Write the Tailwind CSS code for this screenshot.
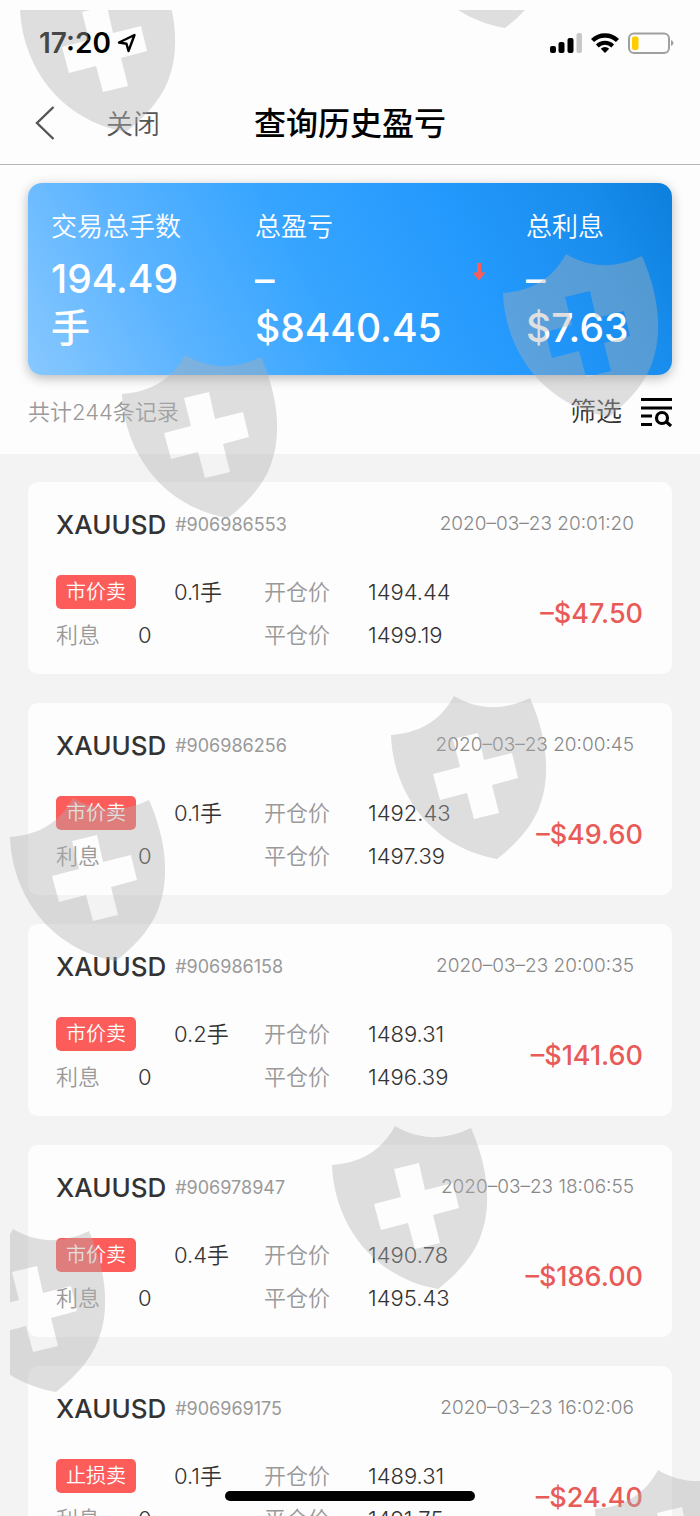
<!DOCTYPE html>
<html lang="zh-CN">
<head>
  <meta charset="UTF-8" />
  <meta name="viewport" content="width=device-width, initial-scale=1.0"/>
  <title>查询历史盈亏</title>
  <script src="https://cdn.jsdelivr.net/npm/@tailwindcss/browser@4"></script>
</head>
<body class="bg-[#f3f3f3] font-['Inter','Noto_Sans_CJK_SC',sans-serif] text-[#333]">

<div class="relative h-screen overflow-hidden">

  <!-- Status bar -->
  <div class="flex h-[86px] items-center justify-between bg-[#fdfdfd] pl-[39px] pr-[26px] text-black">
    <div class="flex items-center gap-[6px]">
      <span class="text-[28px] font-semibold leading-8">17:20</span>
      <svg class="h-5 w-5" viewBox="0 0 20 20" fill="none" stroke="currentColor" stroke-width="2.4" stroke-linejoin="round"><path d="M17.500 2 2 9.500l7.500 1.300L11.500 18Z"/></svg>
    </div>
    <div class="flex items-center gap-[9px]">
      <svg class="h-5 w-8" viewBox="0 0 32 20" fill="currentColor"><rect x="0" y="13" width="6" height="7" rx="2"/><rect x="8.500" y="9" width="6" height="11" rx="2"/><rect x="17.500" y="5" width="6" height="15" rx="2"/><rect x="26.500" y="0" width="5.500" height="20" rx="2" fill="#c8c8c8"/></svg>
      <svg class="h-5 w-7" viewBox="0 0 28 20" fill="none" stroke="currentColor"><path d="M1.500 7.500a18 18 0 0 1 25 0" stroke-width="4.400"/><path d="M6.300 13a11 11 0 0 1 15.400 0" stroke-width="4"/><path d="M14 20l-4.200-4.200a6 6 0 0 1 8.400 0Z" fill="currentColor" stroke="none"/></svg>
      <svg class="h-[22px] w-[46px]" viewBox="0 0 46 22" fill="none"><rect x="1" y="1.500" width="40" height="19.500" rx="5" stroke="#a0a0a0" stroke-width="2"/><rect x="4" y="4.500" width="6.500" height="13.500" rx="2" fill="#fc0"/><path d="M43 8q2.500 1 2.500 3t-2.500 3Z" fill="#a0a0a0"/></svg>
    </div>
  </div>

  <!-- Nav bar -->
  <header class="relative flex h-[79px] items-center border-b border-[#b5b5b5] bg-[#fdfdfd] pl-[34px]">
    <button type="button" aria-label="返回" class="-mt-1 text-[#555]">
      <svg class="h-9 w-[22px]" viewBox="0 0 22 36" fill="none" stroke="currentColor" stroke-width="2.400"><path d="M19.500 2 3 18l16.500 16"/></svg>
    </button>
    <button type="button" class="ml-[50px] text-[27px] font-[350] leading-8 text-[#555]">关闭</button>
    <h1 class="absolute inset-x-0 top-5 text-center text-[32px] font-medium leading-9 text-black pointer-events-none">查询历史盈亏</h1>
  </header>

  <!-- Summary -->
  <section class="bg-[#fdfdfd] px-7 pt-[18px]">
    <div class="grid h-48 grid-cols-[204fr_271fr_121fr] rounded-[14px] bg-[linear-gradient(62deg,#88c8ff_0%,#5cb4ff_22%,#37a5ff_44%,#2499fd_68%,#1a8eee_86%,#0c7fdc_100%)] pl-[23px] pr-[25px] pt-[26px] text-white shadow-[0_3px_12px_rgba(0,0,0,0.28)]">
      <div>
        <p class="text-[26px] font-[350] leading-9">交易总手数</p>
        <p class="mt-[9px] w-32 text-[39px] font-medium leading-[49px]">194.49<br>手</p>
      </div>
      <div class="relative">
        <p class="text-[26px] font-[350] leading-9">总盈亏</p>
        <p class="mt-[9px] text-[39px] font-medium leading-[49px]">–<br>$8440.45</p>
        <svg class="absolute right-10 top-[54px] h-[18px] w-[14px]" viewBox="0 0 14 18" fill="#fb5d58"><path d="M5 0h4v9.500h4.500L7 17.500.500 9.500H5Z"/></svg>
      </div>
      <div>
        <p class="text-[26px] font-[350] leading-9">总利息</p>
        <p class="mt-[9px] text-[39px] font-medium leading-[49px]">–<br>$7.63</p>
      </div>
    </div>
    <div class="flex h-[79px] items-center justify-between pb-[6px]">
      <p class="text-[22px] font-[350] leading-8 text-[#999]">共计244条记录</p>
      <button type="button" class="flex items-center gap-[19px] text-[26px] font-[350] leading-8 text-[#333]">
        筛选
        <svg class="h-[30px] w-[31px] text-black" viewBox="0 0 31 30" fill="none" stroke="currentColor" stroke-width="3"><path d="M0 2.500h31M0 11h31M0 19h11M0 27.500h11"/><circle cx="21" cy="21" r="5.500" stroke-width="3.200"/><path d="m25 24.500 5 4.500" stroke-width="3.200"/></svg>
      </button>
    </div>
  </section>

  <!-- Trade records -->
  <ul id="records" class="flex flex-col gap-[29px] px-7 pt-7"></ul>

  <!-- Home indicator -->
  <div class="absolute bottom-[15px] left-1/2 h-[10px] w-[250px] -translate-x-1/2 rounded-full bg-black"></div>

  <!-- Shield watermarks -->
  <svg class="pointer-events-none absolute left-0 top-0" width="700" height="1516" aria-hidden="true">
    <defs>
      <path id="shield" fill-rule="evenodd" d="M64 1C90 16 115 15 140 3C157 42 161 80 150 110C143 131 125 150 107 164C40 152 3 97 1 40C28 38 50 27 64 1ZM63 44L70 72L43 79L50 105L77 98L84 124L109 118L102 90L128 83L122 58L94 65L88 38Z"/>
      <clipPath id="area"><rect x="10" y="10" width="700" height="1516"/></clipPath>
    </defs>
    <g clip-path="url(#area)" fill="#afafaf" fill-opacity="0.4">
      <use href="#shield" x="19" y="-32"/>
      <use href="#shield" x="398" y="-136"/>
      <use href="#shield" x="121" y="354"/>
      <use href="#shield" x="502" y="253"/>
      <use href="#shield" x="390" y="695"/>
      <use href="#shield" x="9" y="797"/>
      <use href="#shield" x="331" y="1125"/>
      <use href="#shield" x="-51" y="1228"/>
      <use href="#shield" x="594" y="1469"/>
    </g>
  </svg>
</div>

<script>
  const records = [
    { id: '906986553', time: '2020–03–23 20:01:20', type: '市价卖', lots: '0.1', open: '1494.44', close: '1499.19', profit: '47.50' },
    { id: '906986256', time: '2020–03–23 20:00:45', type: '市价卖', lots: '0.1', open: '1492.43', close: '1497.39', profit: '49.60' },
    { id: '906986158', time: '2020–03–23 20:00:35', type: '市价卖', lots: '0.2', open: '1489.31', close: '1496.39', profit: '141.60' },
    { id: '906978947', time: '2020–03–23 18:06:55', type: '市价卖', lots: '0.4', open: '1490.78', close: '1495.43', profit: '186.00' },
    { id: '906969175', time: '2020–03–23 16:02:06', type: '止损卖', lots: '0.1', open: '1489.31', close: '1491.75', profit: '24.40' }
  ];

  document.getElementById('records').innerHTML = records.map(function (r) {
    return `
    <li class="rounded-[10px] bg-[#fdfdfd] pb-[22px] pl-7 pr-[29px] pt-[26px]">
      <div class="flex h-8 items-center pr-[9px]">
        <h2 class="text-[26px] font-medium">XAUUSD</h2>
        <span class="ml-[9px] text-[18px] text-[#999]">#${r.id}</span>
        <time class="ml-auto text-[19px] font-light text-[#888]">${r.time}</time>
      </div>
      <div class="mt-[35px] flex items-center text-[22px] leading-[34px]">
        <div class="flex w-[208px] flex-col gap-[9px]">
          <div class="flex">
            <span class="w-20 rounded-[5px] bg-[#fd5d5a] text-center text-[20px] font-[350] text-white">${r.type}</span>
            <span class="ml-[38px] font-[350]">${r.lots}手</span>
          </div>
          <div class="flex"><span class="w-[82px] font-[350] text-[#999]">利息</span><span class="font-[350]">0</span></div>
        </div>
        <dl class="grid grid-cols-[104px_auto] gap-y-[9px] font-[350]">
          <dt class="text-[#999]">开仓价</dt><dd>${r.open}</dd>
          <dt class="text-[#999]">平仓价</dt><dd>${r.close}</dd>
        </dl>
        <strong class="ml-auto text-[27px] font-medium text-[#e85b58]">–$${r.profit}</strong>
      </div>
    </li>`;
  }).join('');
</script>
</body>
</html>
